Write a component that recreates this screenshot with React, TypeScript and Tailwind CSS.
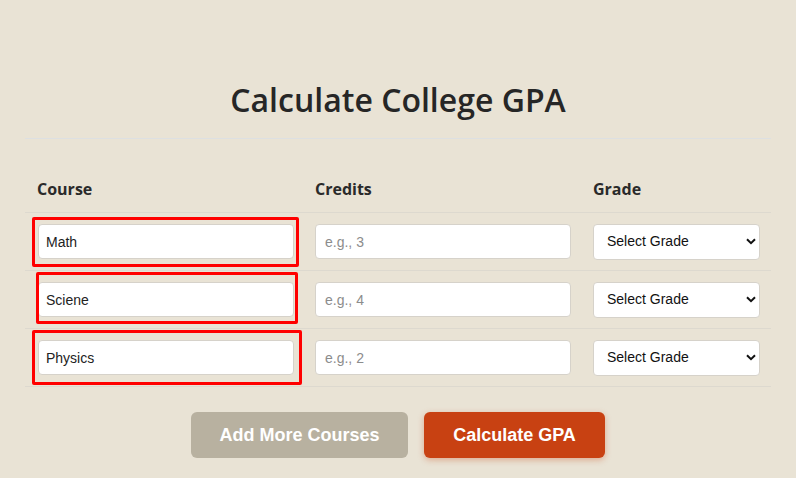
import React from 'react';

const rows = [
  { course: 'Math', credits: 'e.g., 3', box: 'left-[7px] top-[4px] w-[267px] h-[50px]' },
  { course: 'Sciene', credits: 'e.g., 4', box: 'left-[11px] top-[1px] w-[262px] h-[52px]' },
  { course: 'Physics', credits: 'e.g., 2', box: 'left-[7px] top-[1px] w-[270px] h-[55px]' },
];

const App = () => {
  return (
    <div className="min-h-[478px] bg-[#e9e3d5] font-['Liberation_Sans',Arial,sans-serif] text-[#222]">
      <div className="mx-auto w-[746px] pt-[80px]">
        <h1 className="pb-[18px] text-center font-['Open_Sans',sans-serif] text-[32px] font-semibold leading-[40px] text-[#262626] border-b border-[#dde0e2]">
          Calculate College GPA
        </h1>

        <table className="mt-[28px] w-full table-fixed border-collapse">
          <colgroup>
            <col className="w-[278px]" />
            <col className="w-[278px]" />
            <col />
          </colgroup>
          <thead>
            <tr className="border-b border-[#ddd9cf]">
              <th className="px-3 pb-[11px] pt-[10px] text-left font-['Open_Sans',sans-serif] text-[16px] font-bold text-[#2a2a2a]">Course</th>
              <th className="px-3 pb-[11px] pt-[10px] text-left font-['Open_Sans',sans-serif] text-[16px] font-bold text-[#2a2a2a]">Credits</th>
              <th className="px-3 pb-[11px] pt-[10px] text-left font-['Open_Sans',sans-serif] text-[16px] font-bold text-[#2a2a2a]">Grade</th>
            </tr>
          </thead>
          <tbody>
            {rows.map((r) => (
              <tr key={r.course} className="h-[58px] border-b border-[#ddd9cf]">
                <td className="relative px-3 align-middle">
                  <input
                    defaultValue={r.course}
                    className="ml-px block h-[35px] w-[256px] rounded-[4px] border border-[#d6d2ca] bg-white px-[7px] text-[14px] text-[#222] outline-none"
                  />
                  <div className={`pointer-events-none absolute rounded-[2px] border-[3px] border-[#ff0000] ${r.box}`} />
                </td>
                <td className="px-3 align-middle">
                  <input
                    placeholder={r.credits}
                    className="block h-[35px] w-[256px] rounded-[4px] border border-[#d6d2ca] bg-white px-[9px] text-[14px] text-[#222] outline-none placeholder:text-[#8c8c8c]"
                  />
                </td>
                <td className="px-3 align-middle">
                  <div className="relative w-[167px]">
                    <select className="block h-[36px] w-full appearance-none rounded-[4px] border border-[#d6d2ca] bg-white pl-[13px] text-[14px] text-[#111] outline-none">
                      <option>Select Grade</option>
                    </select>
                    <svg className="pointer-events-none absolute right-[4px] top-[14px]" width="10" height="7" viewBox="0 0 10 7">
                      <path d="M1 1.2 L5 5.2 L9 1.2" fill="none" stroke="#111" strokeWidth="2" />
                    </svg>
                  </div>
                </td>
              </tr>
            ))}
          </tbody>
        </table>

        <div className="mt-[25px] flex justify-center gap-4">
          <button className="h-[46px] w-[217px] rounded-[6px] bg-[#b8b1a0] text-[18px] font-bold text-white">
            Add More Courses
          </button>
          <button className="h-[46px] w-[181px] rounded-[6px] bg-[#c84112] text-[18px] font-bold text-white shadow-[0_2px_6px_rgba(200,65,18,0.35)]">
            Calculate GPA
          </button>
        </div>
      </div>
    </div>
  );
};

export default App;
